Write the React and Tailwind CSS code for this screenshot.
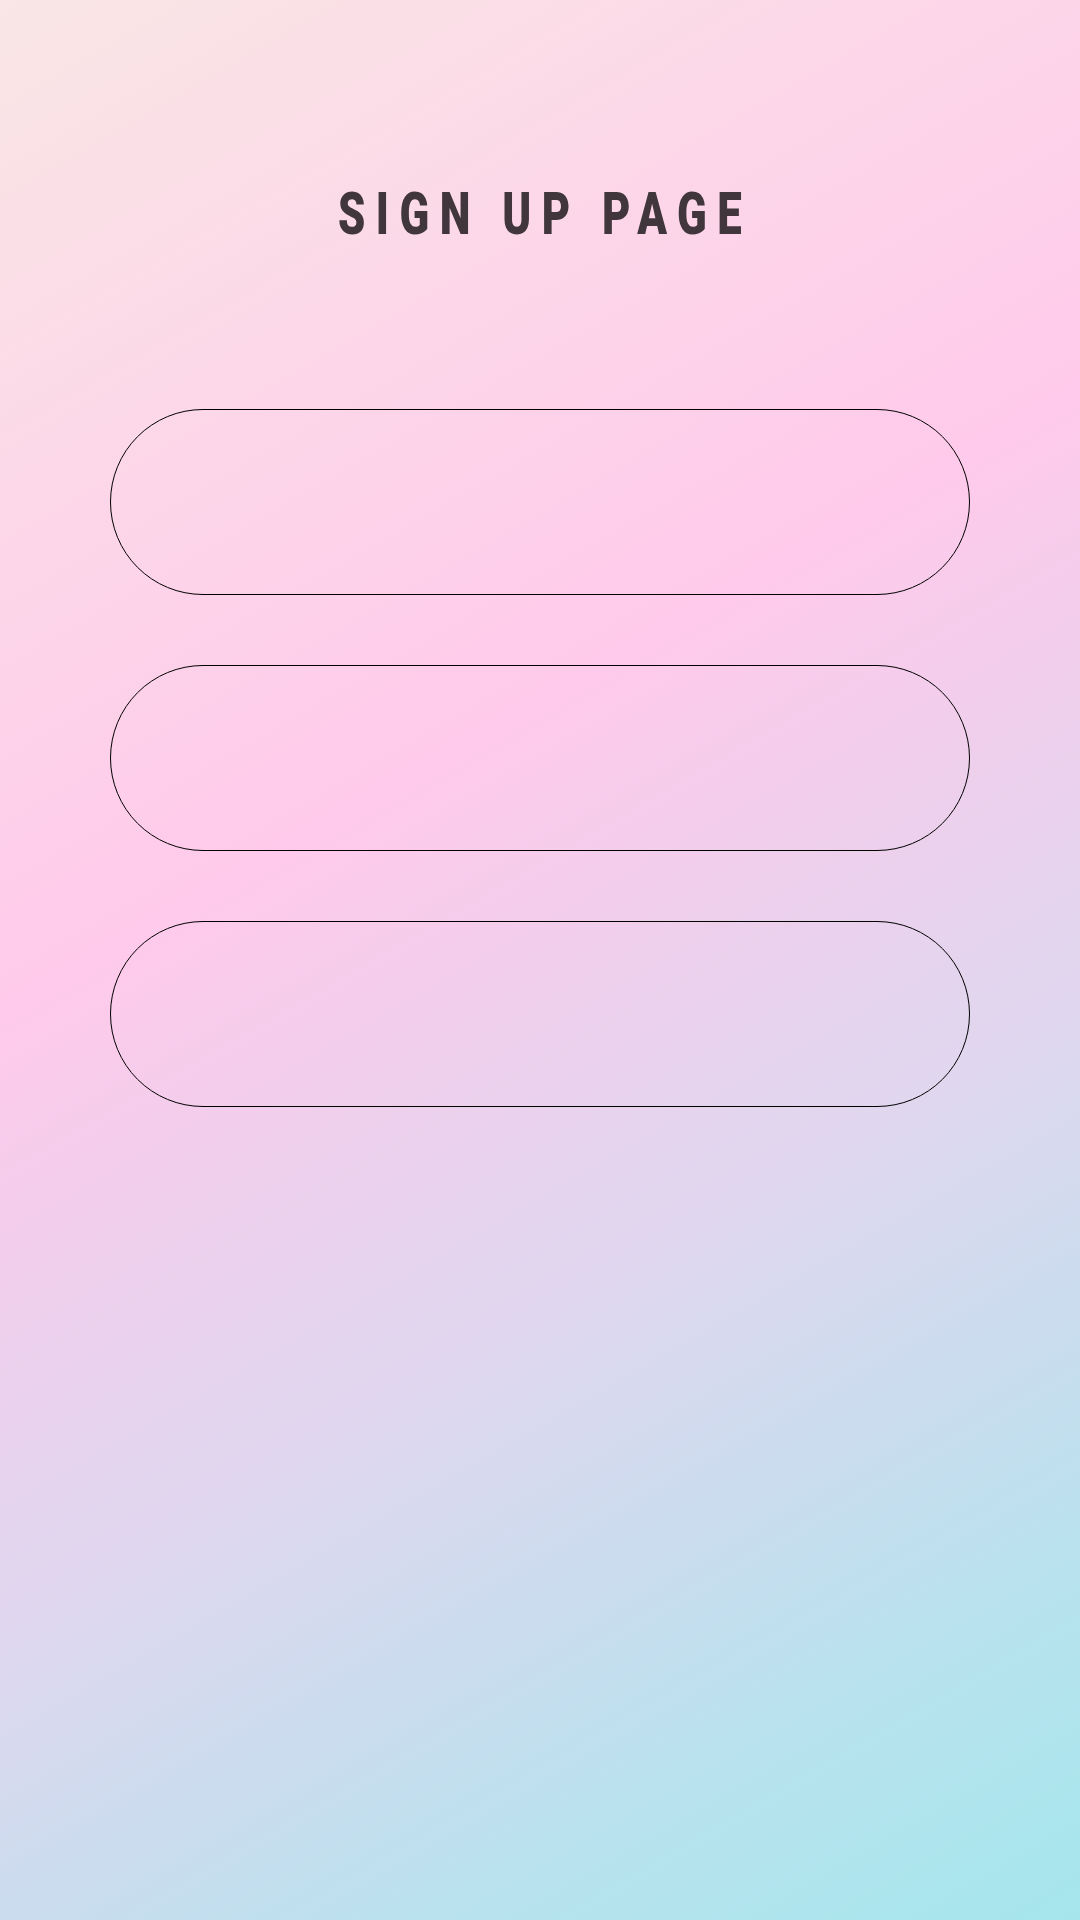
export default function App() {
    const fields = ['name', 'email', 'password']

    return (
        <div
            className="min-h-[1920px] w-full flex flex-col items-center bg-[linear-gradient(150deg,#f9e6e5_0%,#ffcaeb_40%,#eecfec_52%,#e0d7ef_64%,#c6ddee_78%,#b8e2ee_86%,#a5e6ec_100%)]"
            style={{ fontFamily: 'Roboto, "Liberation Sans", sans-serif' }}
        >
            <h1 className="mt-[184px] inline-block scale-x-[0.74] text-[59px] leading-none font-black tracking-[0.24em] pl-[0.24em] text-[#40363c]">
                SIGN UP PAGE
            </h1>

            <div className="mt-[166px] w-[860px] flex flex-col gap-[70px]">
                {fields.map(f => (
                    <div
                        key={f}
                        className="h-[186px] w-full rounded-full border-[1.5px] border-black"
                    />
                ))}
            </div>
        </div>
    )
}
